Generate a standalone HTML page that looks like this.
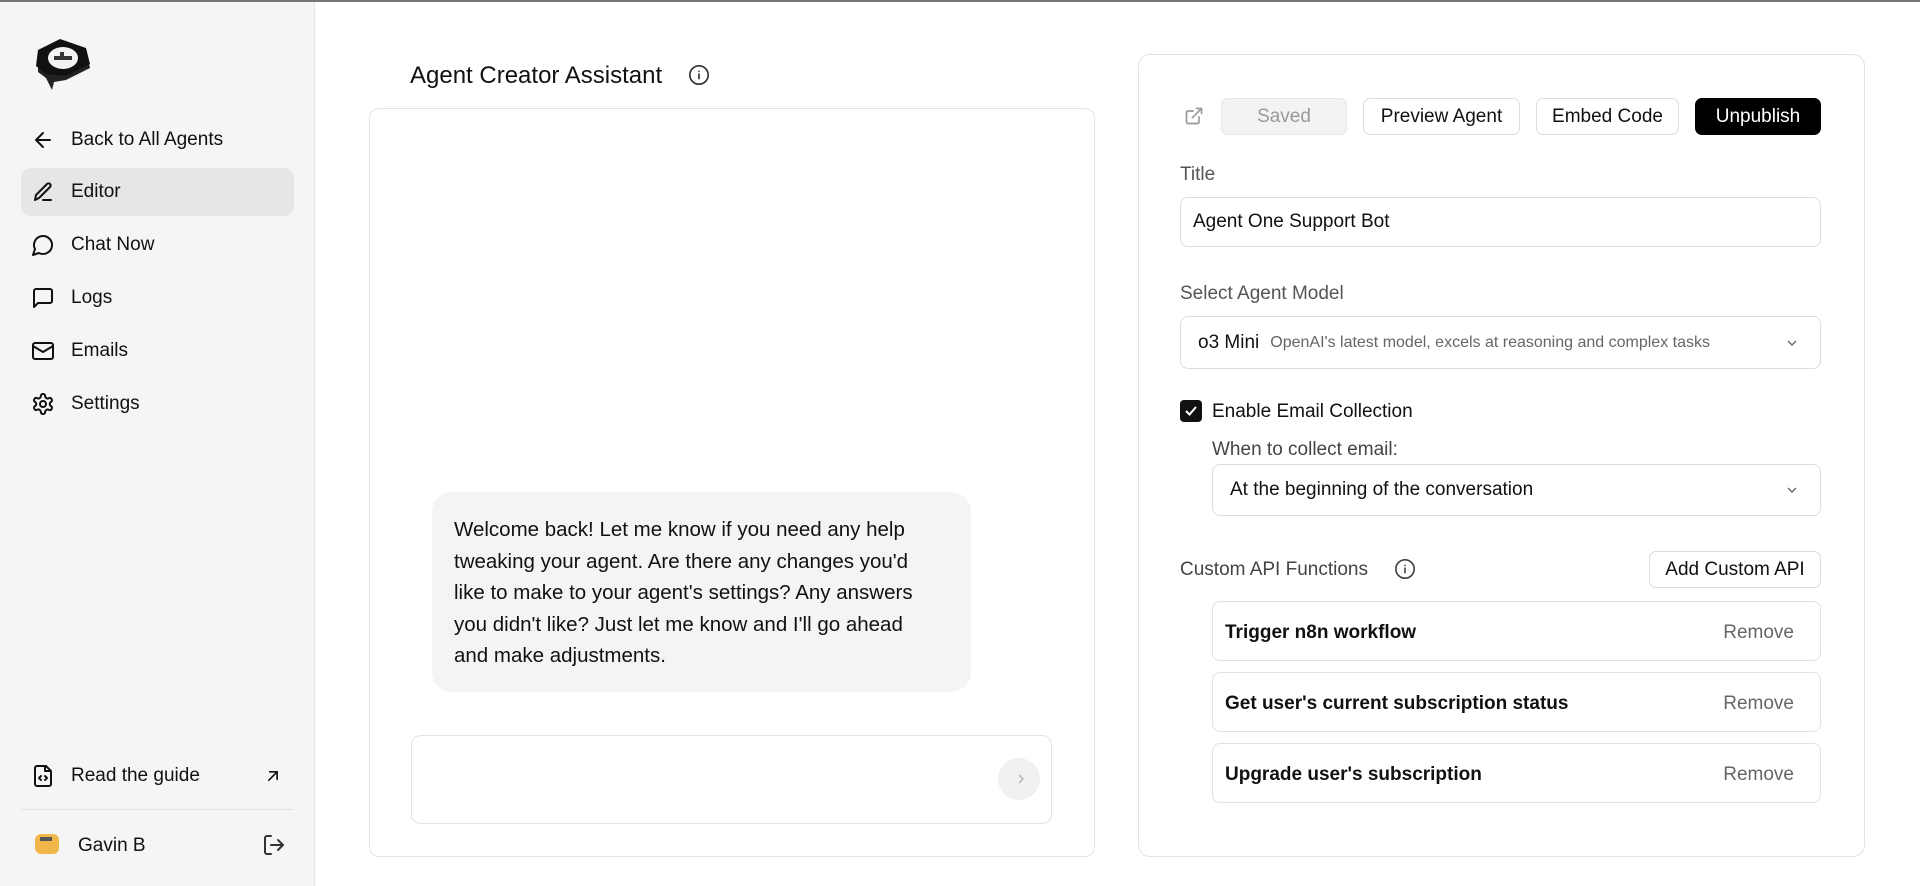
<!DOCTYPE html>
<html><head><meta charset="utf-8"><style>
*{box-sizing:border-box;margin:0;padding:0}
body{width:1920px;height:886px;position:relative;overflow:hidden;background:#fff;font-family:"Liberation Sans",sans-serif;color:#111;}
.a{position:absolute}
.sb{left:0;top:0;width:315px;height:886px;background:#f5f5f5;border-right:1px solid #e6e6e6}
.nav{left:21px;width:273px;height:48px;border-radius:10px;display:flex;align-items:center;font-size:19px;color:#111}
.nav svg{position:absolute;left:10px;width:24px;height:24px;fill:none;stroke:#111;stroke-width:2;stroke-linecap:round;stroke-linejoin:round}
.nav span{position:absolute;left:50px;top:13px}
.btn{height:37px;border:1px solid #ddd;border-radius:7px;display:flex;align-items:center;justify-content:center;font-size:19px;background:#fff}
.lbl{font-size:19px;color:#555}
.inp{border:1px solid #ddd;border-radius:8px;background:#fff;display:flex;align-items:center;font-size:19px}
.chev{position:absolute;right:22px;top:50%;margin-top:-6px;width:12px;height:12px}
.item{left:1212px;width:609px;height:60px;border:1px solid #e2e2e2;border-radius:8px;font-size:19px}
.item b{position:absolute;left:12px;top:20px;font-weight:600;color:#111}
.item i{position:absolute;right:26px;top:20px;font-style:normal;font-weight:400;color:#666}
</style></head><body>
<div class="a" style="left:0;top:0;width:1920px;height:2px;background:#777;z-index:5"></div>
<div class="a sb"></div>
<svg class="a" style="left:32px;top:38px" width="64" height="52" viewBox="0 0 64 52">
<path d="M6 14 L28 2 L54 12 L58 30 L34 42 L22 44 L20 52 L14 40 L6 34 Z" fill="#222"/>
<path d="M6 12 L28 1 L54 10 L58 26 L34 38 L14 36 L4 28 Z" fill="#111"/>
<ellipse cx="31" cy="20" rx="15" ry="11" fill="#f2f2f2"/>
<path d="M22 18 h6 v-4 h4 v4 h8 v4 h-18z" fill="#333"/>
</svg>
<div class="a nav" style="top:116px"><svg viewBox="0 0 24 24"><path d="M19 12H5M12 5l-7 7 7 7"/></svg><span>Back to All Agents</span></div>
<div class="a nav" style="top:168px;background:#e6e6e5"><svg viewBox="0 0 24 24"><path d="M4 20l1-5L16 4a2 2 0 0 1 3 3L8 18z M12 20h8"/></svg><span>Editor</span></div>
<div class="a nav" style="top:221px"><svg viewBox="0 0 24 24"><path d="M7.9 20A9 9 0 1 0 4 16.1L2 22z"/></svg><span>Chat Now</span></div>
<div class="a nav" style="top:274px"><svg viewBox="0 0 24 24"><path d="M21 15a2 2 0 0 1-2 2H7l-4 4V5a2 2 0 0 1 2-2h14a2 2 0 0 1 2 2z"/></svg><span>Logs</span></div>
<div class="a nav" style="top:327px"><svg viewBox="0 0 24 24"><rect x="2" y="4" width="20" height="16" rx="2"/><path d="M22 7l-10 6L2 7"/></svg><span>Emails</span></div>
<div class="a nav" style="top:380px"><svg viewBox="0 0 24 24"><circle cx="12" cy="12" r="3"/><path d="M12.2 2h-.4a2 2 0 0 0-2 2v.2a2 2 0 0 1-1 1.7l-.4.3a2 2 0 0 1-2 0l-.2-.1a2 2 0 0 0-2.7.7l-.2.4a2 2 0 0 0 .7 2.7l.2.1a2 2 0 0 1 1 1.7v.5a2 2 0 0 1-1 1.7l-.2.1a2 2 0 0 0-.7 2.7l.2.4a2 2 0 0 0 2.7.7l.2-.1a2 2 0 0 1 2 0l.4.3a2 2 0 0 1 1 1.7V20a2 2 0 0 0 2 2h.4a2 2 0 0 0 2-2v-.2a2 2 0 0 1 1-1.7l.4-.3a2 2 0 0 1 2 0l.2.1a2 2 0 0 0 2.7-.7l.2-.4a2 2 0 0 0-.7-2.7l-.2-.1a2 2 0 0 1-1-1.7v-.5a2 2 0 0 1 1-1.7l.2-.1a2 2 0 0 0 .7-2.7l-.2-.4a2 2 0 0 0-2.7-.7l-.2.1a2 2 0 0 1-2 0l-.4-.3a2 2 0 0 1-1-1.7V4a2 2 0 0 0-2-2z"/></svg><span>Settings</span></div>
<div class="a nav" style="top:752px"><svg viewBox="0 0 24 24"><path d="M15 2H6a2 2 0 0 0-2 2v16a2 2 0 0 0 2 2h12a2 2 0 0 0 2-2V7z M14 2v5h5 M10 12l-2 2 2 2 M14 12l2 2-2 2"/></svg><span>Read the guide</span><svg viewBox="0 0 24 24" style="left:242px;width:20px;height:20px"><path d="M7 17L17 7M8 7h9v9"/></svg></div>
<div class="a" style="left:21px;top:809px;width:273px;height:1px;background:#e2e2e2"></div>
<div class="a" style="left:35px;top:834px;width:24px;height:20px;background:#f0b64a;border-radius:6px"></div>
<div class="a" style="left:40px;top:837px;width:12px;height:4px;background:#555"></div>
<div class="a" style="left:78px;top:835px;font-size:19px">Gavin B</div>
<svg class="a" style="left:262px;top:833px" width="24" height="24" viewBox="0 0 24 24" fill="none" stroke="#333" stroke-width="2" stroke-linecap="round" stroke-linejoin="round"><path d="M9 21H5a2 2 0 0 1-2-2V5a2 2 0 0 1 2-2h4M16 17l5-5-5-5M21 12H9"/></svg>

<div class="a" style="left:410px;top:62px;font-size:24px;font-weight:500">Agent Creator Assistant</div>
<svg class="a" style="left:688px;top:64px" width="22" height="22" viewBox="0 0 24 24" fill="none" stroke="#333" stroke-width="1.8"><circle cx="12" cy="12" r="10"/><path d="M12 16v-5M12 8h.01" stroke-linecap="round"/></svg>
<div class="a" style="left:369px;top:108px;width:726px;height:749px;border:1px solid #e3e3e3;border-radius:10px"></div>
<div class="a" style="left:432px;top:492px;width:539px;height:200px;background:#f3f4f6;border-radius:20px;padding:22px 22px;font-size:20.5px;line-height:31.5px;color:#111;white-space:nowrap">Welcome back! Let me know if you need any help<br>tweaking your agent. Are there any changes you'd<br>like to make to your agent's settings? Any answers<br>you didn't like? Just let me know and I'll go ahead<br>and make adjustments.</div>
<div class="a" style="left:411px;top:735px;width:641px;height:89px;border:1px solid #e3e3e3;border-radius:10px"></div>
<div class="a" style="left:998px;top:758px;width:42px;height:42px;border-radius:50%;background:#f1f1f1"></div>
<svg class="a" style="left:1014px;top:772px" width="14" height="14" viewBox="0 0 14 14" fill="none" stroke="#bbb" stroke-width="1.6"><path d="M5 3l4 4-4 4"/></svg>

<div class="a" style="left:1138px;top:54px;width:727px;height:803px;border:1px solid #e3e3e3;border-radius:12px"></div>
<svg class="a" style="left:1184px;top:106px" width="20" height="20" viewBox="0 0 24 24" fill="none" stroke="#999" stroke-width="2" stroke-linecap="round" stroke-linejoin="round"><path d="M18 13v6a2 2 0 0 1-2 2H5a2 2 0 0 1-2-2V8a2 2 0 0 1 2-2h6M15 3h6v6M10 14L21 3"/></svg>
<div class="a btn" style="left:1221px;top:98px;width:126px;background:#f3f3f3;color:#999;border-color:#e5e5e5">Saved</div>
<div class="a btn" style="left:1363px;top:98px;width:157px">Preview Agent</div>
<div class="a btn" style="left:1536px;top:98px;width:143px">Embed Code</div>
<div class="a btn" style="left:1695px;top:98px;width:126px;background:#000;color:#fff;border-color:#000">Unpublish</div>
<div class="a lbl" style="left:1180px;top:164px">Title</div>
<div class="a inp" style="left:1180px;top:197px;width:641px;height:50px;padding-left:12px">Agent One Support Bot</div>
<div class="a lbl" style="left:1180px;top:283px">Select Agent Model</div>
<div class="a inp" style="left:1180px;top:316px;width:641px;height:53px;padding-left:17px">o3 Mini<span style="font-size:16px;color:#666;margin-left:11px">OpenAI's latest model, excels at reasoning and complex tasks</span><svg class="chev" viewBox="0 0 12 12" fill="none" stroke="#666" stroke-width="1.4"><path d="M2 4l4 4 4-4"/></svg></div>
<div class="a" style="left:1180px;top:400px;width:22px;height:22px;background:#111;border-radius:4px"></div>
<svg class="a" style="left:1183px;top:403px" width="16" height="16" viewBox="0 0 16 16" fill="none" stroke="#fff" stroke-width="2"><path d="M3 8l3.5 3.5L13 4"/></svg>
<div class="a" style="left:1212px;top:401px;font-size:19px;font-weight:500">Enable Email Collection</div>
<div class="a lbl" style="left:1212px;top:439px;color:#444">When to collect email:</div>
<div class="a inp" style="left:1212px;top:464px;width:609px;height:52px;padding-left:17px">At the beginning of the conversation<svg class="chev" viewBox="0 0 12 12" fill="none" stroke="#666" stroke-width="1.4"><path d="M2 4l4 4 4-4"/></svg></div>
<div class="a lbl" style="left:1180px;top:559px;color:#444">Custom API Functions</div>
<svg class="a" style="left:1394px;top:558px" width="22" height="22" viewBox="0 0 24 24" fill="none" stroke="#444" stroke-width="1.8"><circle cx="12" cy="12" r="10"/><path d="M12 16v-5M12 8h.01" stroke-linecap="round"/></svg>
<div class="a btn" style="left:1649px;top:551px;width:172px;height:37px">Add Custom API</div>
<div class="a item" style="top:601px"><b>Trigger n8n workflow</b><i>Remove</i></div>
<div class="a item" style="top:672px"><b>Get user's current subscription status</b><i>Remove</i></div>
<div class="a item" style="top:743px"><b>Upgrade user's subscription</b><i>Remove</i></div>
</body></html>
